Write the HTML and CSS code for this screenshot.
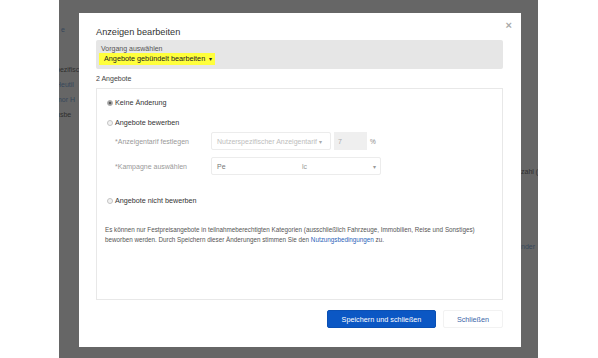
FILE: index.html
```html
<!DOCTYPE html>
<html lang="de">
<head>
    <meta charset="UTF-8">
    <title>Anzeigen bearbeiten</title>
    <link rel="stylesheet" href="styles.css">
</head>
<body>
<div class="backdrop">
    <div class="page-side left">
        <span class="bg-text link first">e</span>
        <span class="bg-text">pezifisc</span>
        <span class="bg-text link">Heutil</span>
        <span class="bg-text link">mor H</span>
        <span class="bg-text">usbe</span>
    </div>

    <div class="modal">
        <button class="close">&times;</button>
        <h3 class="modal-title">Anzeigen bearbeiten</h3>

        <div class="action-box">
            <div class="action-label">Vorgang auswählen</div>
            <span class="action-select">Angebote gebündelt bearbeiten <span class="caret">&#9662;</span></span>
        </div>

        <div class="count">2 Angebote</div>

        <div class="panel">
            <label class="option"><span class="radio checked"></span>Keine Änderung</label>
            <label class="option second"><span class="radio"></span>Angebote bewerben</label>

            <div class="field-row first">
                <span class="field-label">*Anzeigentarif festlegen</span>
                <span class="select disabled small">Nutzerspezifischer Anzeigentarif <span class="caret">&#9662;</span></span>
                <span class="rate-input">7</span>
                <span class="unit">%</span>
            </div>
            <div class="field-row">
                <span class="field-label">*Kampagne auswählen</span>
                <span class="select wide"><span class="sel-value">Pe</span><span class="sel-gap">lc</span><span class="caret">&#9662;</span></span>
            </div>

            <label class="option last"><span class="radio"></span>Angebote nicht bewerben</label>

            <p class="note">Es können nur Festpreisangebote in teilnahmeberechtigten Kategorien (ausschließlich Fahrzeuge, Immobilien, Reise und Sonstiges) beworben werden. Durch Speichern dieser Änderungen stimmen Sie den <a href="#">Nutzungsbedingungen</a> zu.</p>
        </div>

        <div class="modal-footer">
            <button class="btn primary">Speichern und schließen</button>
            <button class="btn secondary">Schließen</button>
        </div>
    </div>

    <div class="page-side right">
        <span class="bg-text">zahl (</span>
        <span class="bg-text link lower">nder</span>
    </div>
</div>
</body>
</html>
```

FILE: styles.css
```css
/* General Styles */
body {
    margin: 0;
    padding: 0 0 0 59px;
    background-color: #fff;
    font-family: 'Liberation Sans', Arial, sans-serif;
    color: #333;
}

.backdrop {
    width: 479px;
    height: 358px;
    background-color: #666;
    display: flex;
}

/* Page content seen behind the overlay */
.page-side {
    display: flex;
    flex-direction: column;
    overflow: hidden;
    white-space: nowrap;
}

.page-side.left {
    width: 20px;
    padding-top: 22px;
}

.page-side.right {
    width: 17px;
    padding-top: 164px;
}

.bg-text {
    font-size: 7px;
    line-height: 15px;
    color: #2e2e2e;
}

.page-side.left .bg-text {
    margin-left: -3px;
}

.bg-text.link {
    color: #36465a;
}

.bg-text.first {
    margin-left: 2px !important;
    margin-bottom: 25px;
}

.bg-text.lower {
    margin-top: 60px;
}

/* Modal */
.modal {
    position: relative;
    width: 442px;
    height: 334px;
    margin-top: 13px;
    box-sizing: border-box;
    padding: 13px 18px 19px 17px;
    background-color: #fff;
    display: flex;
    flex-direction: column;
}

.close {
    position: absolute;
    top: 6px;
    right: 9px;
    border: none;
    background: none;
    padding: 0;
    font-family: 'Liberation Sans', Arial, sans-serif;
    font-size: 11px;
    line-height: 12px;
    color: #aaa;
    font-weight: bold;
}

.modal-title {
    margin: 0;
    font-size: 9.2px;
    line-height: 12px;
    font-weight: normal;
    color: #333;
}

.action-box {
    margin-top: 2px;
    padding: 4px 3px;
    background-color: #e6e6e6;
    border-radius: 2px;
    display: flex;
    flex-direction: column;
    align-items: flex-start;
}

.action-label {
    padding-left: 2px;
    font-size: 7px;
    line-height: 9px;
    color: #555;
}

.action-select {
    padding: 0 3px 0 5px;
    background-color: #ffff3c;
    font-size: 7.25px;
    line-height: 12px;
    color: #222;
}

.caret {
    font-size: 6px;
    margin-left: 2px;
}

.count {
    margin-top: 5px;
    margin-bottom: 4px;
    font-size: 7px;
    line-height: 10px;
    color: #444;
}

.panel {
    flex: 1;
    border: 1px solid #e8e8e8;
    padding: 9px 10px 0;
}

.option {
    display: flex;
    align-items: center;
    font-size: 7.2px;
    line-height: 10px;
    color: #333;
}

.option.second {
    margin-top: 10px;
}

.option.last {
    margin-top: 21px;
}

.radio {
    width: 4px;
    height: 4px;
    margin-right: 2px;
    border: 1px solid #c4c4c4;
    border-radius: 50%;
    background-color: #f2f2f2;
    display: flex;
    align-items: center;
    justify-content: center;
}

.radio.checked {
    background-color: #9a9a9a;
    border-color: #b0b0b0;
}

.radio.checked::after {
    content: "";
    width: 2px;
    height: 2px;
    border-radius: 50%;
    background-color: #444;
}

.field-row {
    display: flex;
    align-items: center;
    gap: 3px;
    margin-top: 7px;
    margin-left: 8px;
}

.field-row.first {
    margin-top: 4px;
}

.field-label {
    width: 93px;
    font-size: 7px;
    color: #999;
}

.select {
    height: 18px;
    box-sizing: border-box;
    border: 1px solid #ececec;
    border-radius: 2px;
    padding: 0 4px 0 5px;
    display: flex;
    align-items: center;
    font-size: 7px;
    color: #777;
}

.select.small {
    width: 120px;
}

.select.wide {
    width: 170px;
}

.select.disabled {
    color: #bdbdbd;
}

.select.disabled .caret {
    color: #aaa;
}

.sel-value {
    width: 85px;
}

.sel-gap {
    flex: 1;
    color: #999;
}

.select.wide .caret {
    color: #999;
}

.rate-input {
    width: 33px;
    height: 18px;
    box-sizing: border-box;
    padding-left: 4px;
    background-color: #efefef;
    display: flex;
    align-items: center;
    font-size: 7px;
    color: #aaa;
}

.unit {
    font-size: 6.5px;
    color: #888;
}

.note {
    margin: 19px 0 0 -2px;
    font-size: 6.3px;
    line-height: 9.5px;
    color: #555;
}

.note a {
    color: #2b63b8;
    text-decoration: none;
}

.modal-footer {
    display: flex;
    justify-content: flex-end;
    gap: 7px;
    margin-top: 10px;
}

.btn {
    height: 18px;
    border-radius: 2px;
    font-family: 'Liberation Sans', Arial, sans-serif;
    font-size: 7.25px;
    padding: 0;
    cursor: pointer;
}

.btn.primary {
    width: 109px;
    border: 1px solid #0a50b4;
    background-color: #0b57c4;
    color: #fff;
}

.btn.secondary {
    width: 60px;
    border: 1px solid #f2f2f2;
    background-color: #fff;
    color: #3d66a8;
}
```
